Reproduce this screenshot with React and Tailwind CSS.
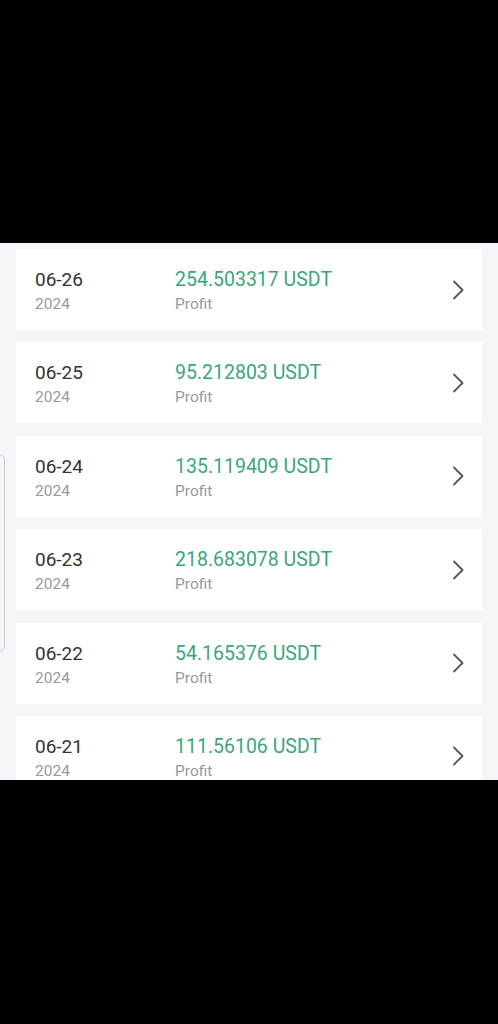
import React from 'react';

const rows = [
  { date: '06-26', year: '2024', amount: '254.503317' },
  { date: '06-25', year: '2024', amount: '95.212803' },
  { date: '06-24', year: '2024', amount: '135.119409' },
  { date: '06-23', year: '2024', amount: '218.683078' },
  { date: '06-22', year: '2024', amount: '54.165376' },
  { date: '06-21', year: '2024', amount: '111.56106' },
];

function Chevron() {
  return (
    <svg width="14" height="22" viewBox="0 0 14 22" fill="none">
      <polyline points="3,2.5 11.5,11 3,19.5" stroke="#555" strokeWidth="1.8" strokeLinecap="round" strokeLinejoin="round" />
    </svg>
  );
}

function Row({ row }) {
  return (
    <div className="h-[81px] shrink-0 bg-white flex items-center pl-[19px] pr-[17px]">
      <div className="w-[140px] flex flex-col pt-[5px]">
        <span className="text-[19px] leading-[25px] text-[#333]">{row.date}</span>
        <span className="text-[15.5px] leading-[25px] text-[#999]">{row.year}</span>
      </div>
      <div className="flex-1 flex flex-col pt-[5px]">
        <span className="text-[19.5px] leading-[25px] text-[#3ba67a]">{row.amount} USDT</span>
        <span className="text-[15.5px] leading-[25px] text-[#999]">Profit</span>
      </div>
      <Chevron />
    </div>
  );
}

export default function App() {
  return (
    <div className="w-[498px] h-[1024px] bg-black flex flex-col font-['Roboto','Liberation_Sans',sans-serif]">
      <div className="h-[243px] shrink-0" />
      <div className="relative h-[537px] shrink-0 bg-[#f5f6fa] overflow-hidden">
        <div className="flex flex-col gap-[12.4px] px-4 pt-[6px]">
          {rows.map((r) => (
            <Row key={r.date} row={r} />
          ))}
        </div>
        <div className="absolute left-[-10px] top-[211px] w-[15px] h-[198px] rounded-[6px] border border-[#c9cbd1]" />
      </div>
      <div className="flex-1" />
    </div>
  );
}
